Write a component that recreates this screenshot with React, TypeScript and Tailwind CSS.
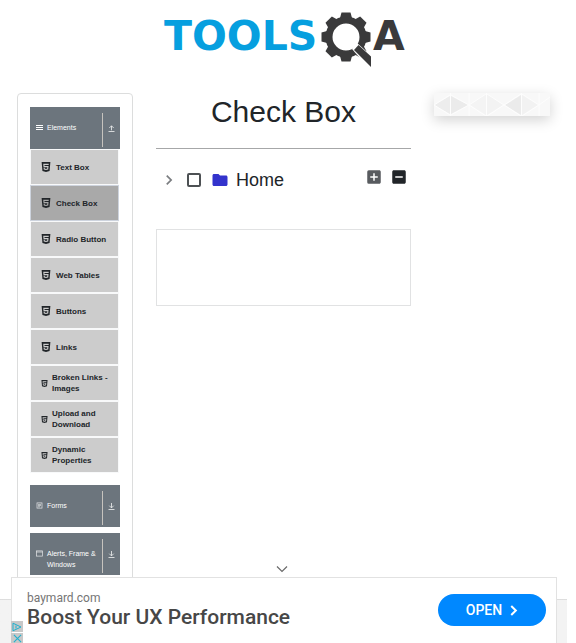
import { MdAddBox, MdChevronRight, MdFolder, MdIndeterminateCheckBox } from "react-icons/md";

function Logo() {
  const teeth = [0, 45, 90, 135, 180, 225, 270, 315];
  return (
    <svg viewBox="0 0 242 60" className="h-[60px] w-[242px]" role="img" aria-label="ToolsQA">
      <text x="1" y="41" fontSize="41" fontWeight="700" fill="#069fdf" className="font-['DejaVu_Sans',sans-serif]">
        TOOLS
      </text>
      <g transform="translate(183 28)">
        <circle r="17" fill="none" stroke="#3a3a3b" strokeWidth="7" />
        {teeth.map((angle) => (
          <path key={angle} d="M-6 -19 L-4.500 -24.500 H4.500 L6 -19 Z" fill="#3a3a3b" transform={`rotate(${angle})`} />
        ))}
        <path d="M6 12 L11 6 L29 22 V34 H25 Z" fill="#ffffff" />
        <path d="M12.500 8 L25 19.500 V30 L8 13 Z" fill="#3a3a3b" />
      </g>
      <text x="210" y="41" fontSize="41" fontWeight="700" fill="#3a3a3b" className="font-['DejaVu_Sans',sans-serif]">
        A
      </text>
    </svg>
  );
}

function HtmlIcon({ small }: { small?: boolean }) {
  return (
    <svg viewBox="0 0 24 24" className={small ? "size-[7px] shrink-0" : "size-[10px] shrink-0"} fill="#212529">
      <path d="M1.5 0h21l-1.91 21.563L11.977 24l-8.564-2.438L1.5 0zm7.031 9.75l-.232-2.718 10.059.003.23-2.622L5.412 4.41l.698 8.01h9.126l-.326 3.426-2.91.804-2.955-.81-.188-2.11H6.248l.33 4.171L12 19.351l5.379-1.443.744-8.157H8.531z" />
    </svg>
  );
}

function ListIcon() {
  return (
    <svg viewBox="0 0 7 7" className="mt-[2px] size-[7px] shrink-0" stroke="#ffffff">
      <path d="M0 1.500h7M0 3.500h7M0 5.500h7" />
    </svg>
  );
}

function FormIcon() {
  return (
    <svg viewBox="0 0 7 7" className="mt-[2px] size-[7px] shrink-0" fill="none" stroke="#e4e6e8" strokeWidth=".7">
      <rect x="1" y=".9" width="5" height="5.2" />
      <path d="M2 2.4h3M2 3.600h3M2 4.800h2" />
    </svg>
  );
}

function WindowIcon() {
  return (
    <svg viewBox="0 0 7 7" className="mt-[2px] size-[7px] shrink-0" fill="none" stroke="#e4e6e8" strokeWidth=".7">
      <rect x=".4" y=".9" width="6.2" height="5.2" />
      <path d="M.4 2h6.2" />
    </svg>
  );
}

function ArrowIcon({ up }: { up?: boolean }) {
  return (
    <svg viewBox="0 0 7 7" className="size-[7px]" fill="none" stroke="#f1f2f3" strokeWidth=".8">
      <path d={up ? "M.5 6.5h6M3.5 5.3V.8M1.3 3 3.5.8 5.7 3" : "M.5 6.5h6M3.5 0v4.8M1.3 2.7 3.5 4.9 5.7 2.7"} />
    </svg>
  );
}

function GroupHeader({ icon, label, open }: { icon: React.ReactNode; label: string; open?: boolean }) {
  return (
    <button type="button" aria-expanded={!!open} className="flex h-[42px] w-full bg-[#6c757d] pt-[6px] pb-[2px] text-left text-white">
      <span className="flex flex-1 gap-[4px] pt-[9px] pl-[6px]">
        {icon}
        <span className="text-[7px] leading-[11px]">{label}</span>
      </span>
      <span className="flex w-[18px] shrink-0 justify-center self-stretch border-l border-[#c6c3be] pt-[12px]">
        <ArrowIcon up={open} />
      </span>
    </button>
  );
}

const items = [
  { label: "Text Box" },
  { label: "Check Box", active: true },
  { label: "Radio Button" },
  { label: "Web Tables" },
  { label: "Buttons" },
  { label: "Links" },
  { label: "Broken Links - Images", wrap: true },
  { label: "Upload and Download", wrap: true },
  { label: "Dynamic Properties", wrap: true },
];

function Sidebar() {
  return (
    <nav className="rounded-[4px] border border-[#dcdddd] px-[12px] pt-[13px] pb-[12px]">
      <GroupHeader icon={<ListIcon />} label="Elements" open />
      <ul className="mr-px mb-[12px]">
        {items.map((item) => (
          <li
            key={item.label}
            className={
              item.active
                ? "flex h-[36px] border border-[#ced4de] bg-[#a9a9a9]"
                : "flex h-[36px] border border-[#f8f9fa] bg-[#cccccc]"
            }
          >
            <a
              href="#"
              className={
                item.wrap
                  ? "flex flex-1 items-center gap-[4px] pl-[10px] text-[8px] leading-[11px] font-bold"
                  : "flex flex-1 items-center gap-[5px] pl-[10px] text-[8px] leading-[11px] font-bold"
              }
            >
              <HtmlIcon small={item.wrap} />
              <span className={item.wrap ? "w-[60px]" : ""}>{item.label}</span>
            </a>
          </li>
        ))}
      </ul>
      <div className="flex flex-col gap-[6px]">
        <GroupHeader icon={<FormIcon />} label="Forms" />
        <GroupHeader icon={<WindowIcon />} label="Alerts, Frame & Windows" />
      </div>
    </nav>
  );
}

function CheckTree() {
  return (
    <main>
      <h1 className="text-center text-[30px] leading-[38px]">Check Box</h1>
      <hr className="mt-[17px] border-[#a6a7a8]" />
      <div className="mt-[19px] flex h-[24px] items-center">
        <button type="button" aria-label="Toggle" className="ml-[3px] text-[#7b7e81]">
          <MdChevronRight className="size-[20px]" />
        </button>
        <label className="flex items-center">
          <input
            type="checkbox"
            className="ml-[8px] size-[14px] appearance-none rounded-[2px] border-2 border-[#4d5154] bg-white"
          />
          <MdFolder className="ml-[10px] size-[18px] text-[#3333cc]" />
          <span className="ml-[7px] text-[18px] leading-[24px]">Home</span>
        </label>
        <span className="mr-[3px] mb-[6px] ml-auto flex gap-[7px]">
          <button type="button" aria-label="Expand all" className="text-[#585b5f]">
            <MdAddBox className="size-[18px]" />
          </button>
          <button type="button" aria-label="Collapse all">
            <MdIndeterminateCheckBox className="size-[18px]" />
          </button>
        </span>
      </div>
      <div className="mt-[37px] h-[77px] border border-[#e1e2e3]" />
    </main>
  );
}

function Banner() {
  return (
    <aside>
      <svg
        viewBox="0 0 116 23"
        preserveAspectRatio="none"
        className="h-[23px] w-full bg-[#f8f8f8] shadow-[0_4px_14px_rgba(0,0,0,0.18)]"
      >
        <path d="M0 12 16 3V21Z" fill="#ededed" />
        <path d="M17 3 34 12 17 21Z" fill="#ebebeb" />
        <path d="M36 12 52 1V22Z" fill="#f4f4f4" />
        <path d="M53 1 69 12 53 22Z" fill="#f3f3f3" />
        <path d="M71 12 87 2V22Z" fill="#ebebeb" />
        <path d="M88 2 104 12 88 22Z" fill="#f2f2f2" />
        <path
          d="M35 0V23M16.500 0V23M52.500 0V23M87.500 0V23M105 0V23M0 12 16 2M0 12 16 22M17 2 35 12 17 22M35 12 52 1M35 12 52 23M53 1 70 12 53 23M70 12 87 1M70 12 87 23M88 1 105 12 88 23M105 12 116 4"
          fill="none"
          stroke="#fdfdfd"
        />
      </svg>
    </aside>
  );
}

function Ad() {
  return (
    <footer className="fixed inset-x-0 bottom-0 pr-[9px]">
      <div className="flex justify-center pb-[4px] text-[#6a6a6a]">
        <button type="button" aria-label="Hide ad" className="mr-[3px]">
          <svg viewBox="0 0 12 8" className="h-[8px] w-[12px]" fill="none" stroke="currentColor" strokeWidth="1.200">
            <path d="M1 1.500 6 6.500 11 1.500" />
          </svg>
        </button>
      </div>
      <div className="bg-linear-to-b from-white from-[22px] via-[#c9c9c9] via-[22px] to-[#f3f3f3] to-[23px] pr-[10px] pl-[11px]">
        <div className="relative flex h-[66px] items-start justify-between border border-b-0 border-[#e2e2e2] bg-white pt-[12px] pr-[10px] pl-[15px] font-[Roboto,sans-serif]">
          <div>
            <p className="text-[12px] leading-[16px] text-[#757575]">baymard.com</p>
            <a href="#" className="block text-[21px] leading-[22px] font-medium text-[#474747]">
              Boost Your UX Performance
            </a>
          </div>
          <button
            type="button"
            className="mt-[4px] flex h-[32px] w-[108px] items-center justify-center gap-[8px] rounded-full bg-[#0088ff] text-[14px] font-medium text-white"
          >
            OPEN
            <svg viewBox="0 0 8 12" className="h-[11px] w-[8px]" fill="none" stroke="currentColor" strokeWidth="2.200">
              <path d="M1 1 6 6 1 11" />
            </svg>
          </button>
          <div className="absolute bottom-0 -left-px flex flex-col gap-px">
            <button type="button" aria-label="Ad choices" className="flex h-[11px] w-[12px] items-center justify-center bg-[#c8c8c8]">
              <svg viewBox="0 0 10 10" className="size-[10px]" fill="none" stroke="#1fb1cf">
                <path d="M1 1.200 9 5 1 8.800ZM4 3.500v3" />
              </svg>
            </button>
            <button type="button" aria-label="Close ad" className="flex h-[10px] w-[12px] items-center justify-center bg-[#c8c8c8]">
              <svg viewBox="0 0 10 10" className="size-[9px]" fill="none" stroke="#1fb1cf" strokeWidth="1.200">
                <path d="M1 1 9 9M9 1 1 9" />
              </svg>
            </button>
          </div>
        </div>
      </div>
    </footer>
  );
}

export default function App() {
  return (
    <div className="h-screen overflow-hidden bg-white pr-[9px] font-['Liberation_Sans',Arial,sans-serif] text-[#212529]">
      <header className="flex h-[93px] justify-center pt-[9px]">
        <Logo />
      </header>
      <div className="grid grid-cols-[116fr_255fr_116fr] gap-[23px] px-[17px]">
        <Sidebar />
        <CheckTree />
        <Banner />
      </div>
      <Ad />
    </div>
  );
}
